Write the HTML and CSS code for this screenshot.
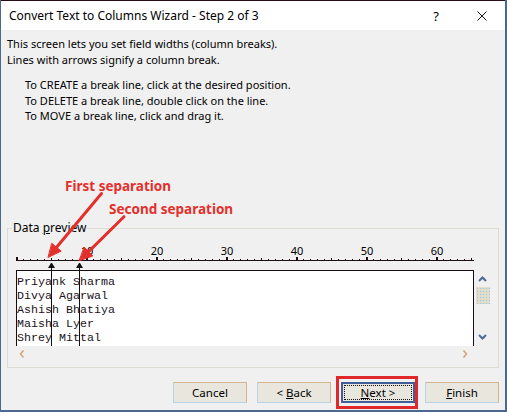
FILE: index.html
```html
<!DOCTYPE html>
<html>
<head>
<meta charset="utf-8">
<title>Convert Text to Columns Wizard</title>
<link rel="stylesheet" href="styles.css">
</head>
<body>
<div class="window">
  <div class="titlebar">
    <span class="title">Convert Text to Columns Wizard - Step 2 of 3</span>
    <span class="cap-btn help">?</span>
    <span class="cap-btn close"><svg width="10" height="10" viewBox="0 0 10 10"><path d="M0.5 0.5 L9.5 9.5 M9.5 0.5 L0.5 9.5" stroke="#111" stroke-width="1" fill="none"/></svg></span>
  </div>
  <div class="content">
    <p class="intro">This screen lets you set field widths (column breaks).<br>Lines with arrows signify a column break.</p>
    <ul class="steps">
      <li>To CREATE a break line, click at the desired position.</li>
      <li>To DELETE a break line, double click on the line.</li>
      <li>To MOVE a break line, click and drag it.</li>
    </ul>
    <fieldset class="group">
      <legend>Data <u>p</u>review</legend>
      <div class="ruler-nums"><span>10</span><span>20</span><span>30</span><span>40</span><span>50</span><span>60</span></div>
      <div class="ruler-ticks"></div>
      <div class="preview-row">
        <div class="textbox">
          <pre class="data">Priyank Sharma
Divya Agarwal
Ashish Bhatiya
Maisha Lyer
Shrey Mittal</pre>
          <span class="brk brk-1"></span>
          <span class="brk brk-2"></span>
        </div>
        <div class="vscroll">
          <svg class="chev" width="17" height="6" viewBox="0 0 17 6"><path d="M5 5 L8.5 1.5 L12 5" stroke="#4a6a9c" stroke-width="2" fill="none"/></svg>
          <div class="thumb"></div>
          <svg class="chev chev-down" width="17" height="6" viewBox="0 0 17 6"><path d="M5 1 L8.5 4.5 L12 1" stroke="#4a6a9c" stroke-width="2" fill="none"/></svg>
        </div>
      </div>
      <div class="hscroll">
        <svg width="6" height="8" viewBox="0 0 6 8"><path d="M4.5 0.5 L1.5 4 L4.5 7.5" stroke="#d3a676" stroke-width="1.6" fill="none"/></svg>
        <svg width="6" height="8" viewBox="0 0 6 8"><path d="M1.5 0.5 L4.5 4 L1.5 7.5" stroke="#d3a676" stroke-width="1.6" fill="none"/></svg>
      </div>
    </fieldset>
    <div class="buttons">
      <button class="btn"><span class="label">Cancel</span></button>
      <button class="btn"><span class="label">&lt; <u>B</u>ack</span></button>
      <button class="btn btn-default"><span class="focus"><span class="label"><u>N</u>ext &gt;</span></span></button>
      <button class="btn"><span class="label"><u>F</u>inish</span></button>
    </div>
  </div>
</div>
<div class="note note-1">First separation</div>
<div class="note note-2">Second separation</div>
<svg class="arrows" width="507" height="412" viewBox="0 0 507 412">
  <g stroke="#e3302c" stroke-width="3" stroke-linecap="round" fill="#e3302c">
    <line x1="101.5" y1="193.5" x2="56.6" y2="247.3"/>
    <polygon points="48.3,257.3 61.2,251.1 52,243.5" stroke-width="1"/>
    <line x1="124" y1="216.7" x2="88.6" y2="251.6"/>
    <polygon points="79.3,260.7 92.8,255.9 84.4,247.3" stroke-width="1"/>
  </g>
</svg>
</body>
</html>
```

FILE: styles.css
```css
* { box-sizing: border-box; }

html, body {
  margin: 0;
  padding: 0;
}

body {
  background: #4a6890;
  width: 507px;
  height: 412px;
  overflow: hidden;
  font-family: "Noto Sans", "Open Sans", sans-serif;
  font-size: 11px;
  color: #000;
}

.window {
  margin-left: 1px;
  width: 504px;
  height: 410px;
  border-top: 1px solid #2b0b16;
  background: #f0f0f0;
  display: flex;
  flex-direction: column;
}

.titlebar {
  height: 29px;
  background: #fff;
  display: flex;
  align-items: center;
  padding-left: 8px;
}

.title {
  font-size: 12px;
  flex: 1;
}

.cap-btn {
  width: 46px;
  height: 29px;
  display: flex;
  align-items: center;
  justify-content: center;
}

.help {
  font-size: 13px;
}

.content {
  padding: 0 6px;
  display: flex;
  flex-direction: column;
}

.intro {
  margin: 6px 0 0 0;
  line-height: 16px;
}

.steps {
  list-style: none;
  margin: 9px 0 0 0;
  padding-left: 18px;
  line-height: 15.5px;
}

.group {
  margin: 96.5px 0 0 0;
  padding: 9px 0 5px 0;
  border: 1px solid #dcdcd2;
  min-width: 0;
}

.group legend {
  margin-left: 4px;
  padding: 0 1px;
  line-height: 16px;
  font-size: 12px;
}

.ruler-nums {
  margin-left: 8px;
  width: 458px;
  height: 12px;
  padding-left: 36px;
  display: flex;
  font-size: 11px;
  line-height: 12px;
}

.ruler-nums span {
  width: 70px;
  flex: none;
  text-align: center;
}

.ruler-ticks {
  margin-left: 8px;
  width: 458px;
  height: 4px;
  border-bottom: 1px solid #1c0c14;
  background:
    repeating-linear-gradient(to right, #1c0c14 0 2px, transparent 2px 70px) 0 0 / 100% 3px no-repeat,
    repeating-linear-gradient(to right, #1c0c14 0 1px, transparent 1px 35px) 0 100% / 100% 2px no-repeat,
    repeating-linear-gradient(to right, #1c0c14 0 1px, transparent 1px 7px) 0 100% / 100% 1px no-repeat;
}

.preview-row {
  margin-top: 9px;
  margin-left: 8px;
  display: flex;
}

.textbox {
  position: relative;
  width: 458px;
  height: 76px;
  background: #fff;
  border: 1px solid #1c0a14;
  border-bottom: none;
}

.data {
  margin: 0;
  padding-top: 4px;
  font-family: "Liberation Mono", monospace;
  font-size: 11.67px;
  line-height: 14px;
  color: #1a1220;
}

.brk {
  position: absolute;
  top: -8px;
  width: 1px;
  height: 83px;
  background: #111;
}

.brk::before {
  content: "";
  position: absolute;
  top: 0;
  left: -3px;
  width: 1px;
  height: 0;
  border-left: 3px solid transparent;
  border-right: 3px solid transparent;
  border-bottom: 5px solid #111;
}

.brk-1 { left: 34px; }
.brk-2 { left: 62px; }

.vscroll {
  width: 17px;
  display: flex;
  flex-direction: column;
  padding-top: 6px;
}

.thumb {
  margin: 5px 0 0 2px;
  width: 14px;
  height: 17px;
  background-color: #e2dccb;
  background-image:
    radial-gradient(circle, #8ec8e8 0.7px, transparent 0.8px),
    radial-gradient(circle, #c8b48c 0.6px, transparent 0.7px);
  background-size: 3px 3px, 4px 4px;
  background-position: 0 0, 1px 2px;
}

.chev-down {
  margin-top: 30px;
}

.hscroll {
  height: 16px;
  margin-left: 8px;
  width: 458px;
  display: flex;
  align-items: center;
  justify-content: space-between;
  padding: 0 6px 0 3px;
}

.buttons {
  margin-top: 14px;
  display: flex;
  justify-content: flex-end;
  gap: 10px;
}

.btn {
  width: 74px;
  height: 21px;
  padding: 0;
  font-family: "Noto Sans", "Open Sans", sans-serif;
  font-size: 11.5px;
  color: #000;
  border: 1px solid #d5b48e;
  border-left-color: #b9d3e6;
  border-bottom-color: #b9d3e6;
  background-color: #e8e6dd;
  background-image: radial-gradient(circle, #f6f6f2 0.5px, transparent 0.6px);
  background-size: 2px 2px;
  display: flex;
  align-items: center;
  justify-content: center;
}

.label {
  white-space: pre;
}

.btn-default {
  position: relative;
  border: 2px solid #41609a;
  padding: 1px;
}

.btn-default::after {
  content: "";
  position: absolute;
  left: -7px;
  right: -5px;
  top: -8px;
  bottom: -8px;
  border: 3px solid #e0282a;
}

.focus {
  flex: 1;
  align-self: stretch;
  display: flex;
  align-items: center;
  justify-content: center;
  border: 1px dotted #111;
}

.note {
  position: absolute;
  color: #e3302c;
  font-family: "Noto Sans", "Open Sans", sans-serif;
  font-weight: bold;
  font-size: 13.5px;
  line-height: 16px;
  white-space: nowrap;
}

.note-1 { left: 65px; top: 178px; }
.note-2 { left: 109px; top: 201px; }

.arrows {
  position: absolute;
  left: 0;
  top: 0;
  pointer-events: none;
}
```
